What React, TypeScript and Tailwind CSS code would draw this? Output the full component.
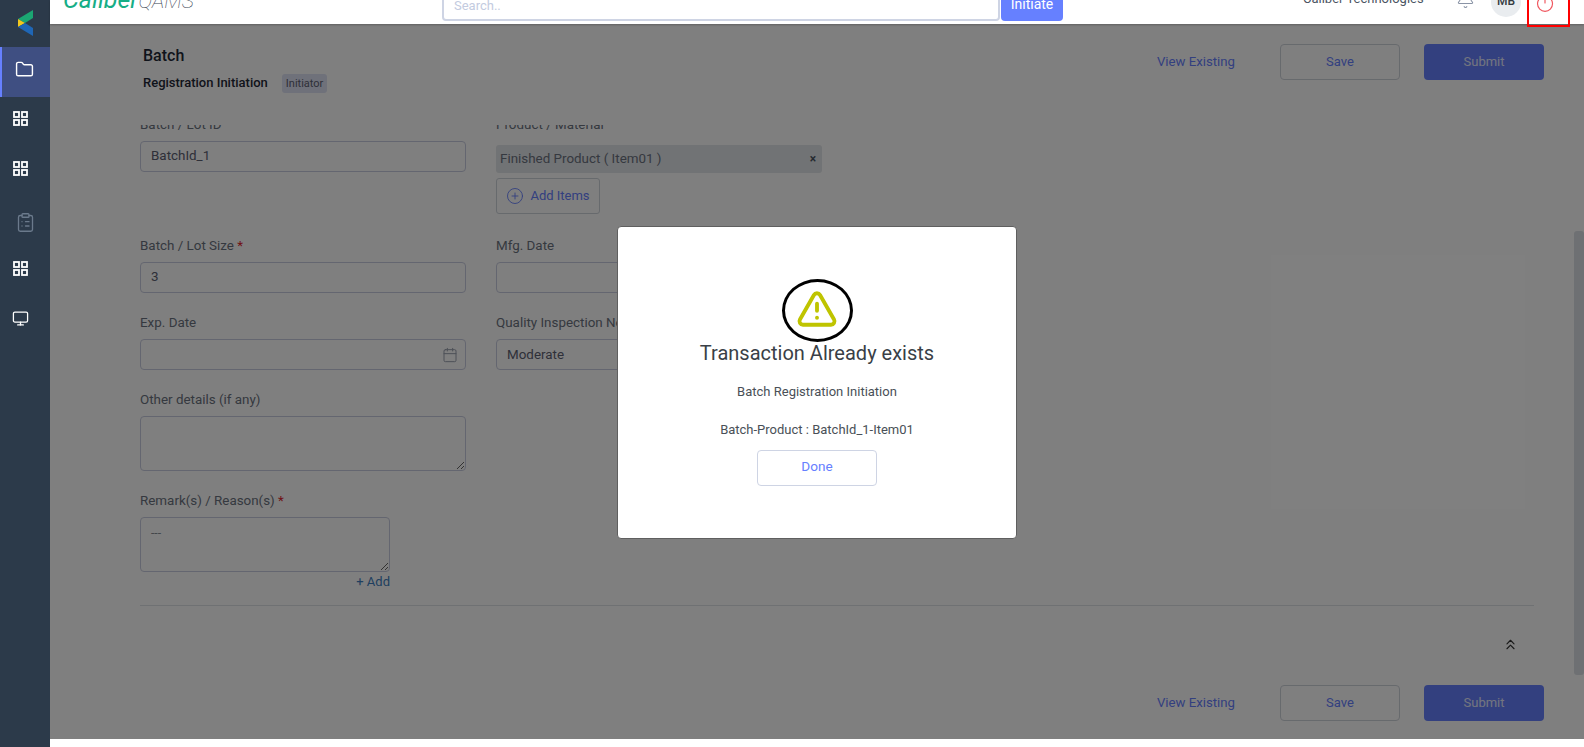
import { Bell, Calendar, ChevronsUp, CirclePlus, ClipboardList, Folder, Monitor, Power, TriangleAlert } from "lucide-react";

function GridIcon() {
  return (
    <svg width="15" height="15" viewBox="0 0 15 15" fill="none" stroke="white" strokeWidth="1.8">
      <rect x="1" y="1" width="5" height="5" />
      <rect x="9" y="1" width="5" height="5" />
      <rect x="1" y="9" width="5" height="5" />
      <rect x="9" y="9" width="5" height="5" />
    </svg>
  );
}

function Logo() {
  return (
    <svg width="16" height="27" viewBox="0 0 16 27">
      <polygon points="15,0 15,8 7,13 0,9" fill="#1ba672" />
      <polygon points="0,9 7,13 0,17" fill="#f2c81e" />
      <polygon points="0,17 7,13 15,18 15,26" fill="#1f66b5" />
    </svg>
  );
}

function Label({ children, required }: { children: React.ReactNode; required?: boolean }) {
  return (
    <div className="h-5 mb-[6px] text-[13.4px] leading-5 text-[#6b7280] whitespace-nowrap">
      {children}
      {required && <span className="text-[#e11d2e]"> *</span>}
    </div>
  );
}

function Field({ value, children }: { value?: React.ReactNode; children?: React.ReactNode }) {
  return (
    <div className="h-[31px] w-full rounded-[4px] border border-[#c9cde0] bg-white px-[10px] flex items-center justify-between text-[13.4px] text-[#5d6072]">
      <span>{value}</span>
      {children}
    </div>
  );
}

function Actions() {
  return (
    <div className="flex items-center justify-end">
      <span className="text-[13.2px] text-[#6680ff] mr-[45px]">View Existing</span>
      <button className="w-[120px] h-[36px] rounded-[4px] border border-[#ced4da] text-[13px] text-[#6680ff] mr-[24px]">Save</button>
      <button className="w-[120px] h-[36px] rounded-[4px] bg-[#6680ff] text-[13px] text-[#e8ebff]">Submit</button>
    </div>
  );
}

export default function App() {
  return (
    <div className="flex h-screen overflow-hidden bg-white font-['Roboto',sans-serif]">
      {/* sidebar */}
      <aside className="w-[50px] shrink-0 bg-[#2c3a4a] flex flex-col">
        <div className="h-[47px] pt-[10px] pl-[18px]"><Logo /></div>
        <div className="h-[50px] w-full bg-[#3f4f82] border-l-2 border-[#6680ff] pl-[13px] pb-[6px] flex items-center">
          <Folder size={19} color="white" strokeWidth={1.8} />
        </div>
        <div className="h-[42px] pl-[13px] flex items-center"><GridIcon /></div>
        <div className="h-[58px] pl-[13px] flex items-center"><GridIcon /></div>
        <div className="h-[50px] pl-[15px] flex items-center"><ClipboardList size={21} color="#6b7a8c" strokeWidth={1.5} /></div>
        <div className="h-[42px] pl-[13px] flex items-center"><GridIcon /></div>
        <div className="h-[58px] pl-[12px] flex items-center"><Monitor size={17} color="white" strokeWidth={1.8} /></div>
      </aside>

      <div className="relative flex-1 min-w-0 flex flex-col h-[739px]">
        {/* top bar */}
        <header className="relative z-20 h-[24px] shrink-0 bg-white shadow-[0_1px_2px_rgba(0,0,0,0.25)]">
          <div className="h-full overflow-hidden flex items-end">
            <div className="ml-[13px] w-[379px] mb-[3px] flex items-baseline text-[25px] leading-[40px] italic whitespace-nowrap">
              <span className="text-[#16ae86]">Caliber</span>
              <span className="text-[#374151] font-thin text-[21px]">QAMS</span>
            </div>
            <div className="w-[558px] h-[40px] mb-[3px] rounded-[4px] border-2 border-[#ced4e4] text-[13px] text-[#c3cbe0] px-[10px] flex items-end pb-[4px]">Search..</div>
            <div className="ml-[1px] w-[62px] h-[40px] mb-[3px] rounded-[4px] bg-[#6680ff] text-white text-[14px] flex items-end justify-center pb-[6px]">Initiate</div>
            <div className="ml-[240px] w-[120px] mb-[15px] text-[13px] leading-5 text-[#4b5563] whitespace-nowrap">Caliber Technologies</div>
            <div className="ml-[33px] mb-[15px]"><Bell size={19} color="#8a94a6" strokeWidth={1.3} /></div>
            <div className="ml-[16px] mb-[7px] w-[30px] h-[30px] pb-[3px] rounded-full bg-[#e9ecef] text-[12px] font-medium text-[#343a40] flex items-center justify-center">MB</div>
            <div className="ml-[14px] mb-[11px]"><Power size={20} color="#f0565e" strokeWidth={1.4} /></div>
          </div>
          <div className="absolute right-[14px] -top-[2px] w-[43px] h-[29px] border-2 border-[#ff0000]" />
        </header>

        <main className="relative flex-1 min-h-0 flex flex-col">
          {/* sticky title */}
          <div className="h-[101px] shrink-0 pl-[93px] pr-[40px] pt-[20px] flex justify-between items-start">
            <div>
              <h1 className="text-[16px] leading-[24px] font-medium text-[#1f2937]">Batch</h1>
              <div className="mt-[5px] flex items-center">
                <span className="text-[13px] font-medium text-[#1f2937]">Registration Initiation</span>
                <span className="ml-[14px] mt-[1px] h-[19px] px-[4px] rounded-[3px] bg-[#dfe3f5] text-[11px] leading-[19px] text-[#5d6072]">Initiator</span>
              </div>
            </div>
            <Actions />
          </div>

          {/* form, scrolled */}
          <div className="flex-1 min-h-0 overflow-hidden pl-[90px] pr-[50px]">
            <div className="-mt-[10px] grid grid-cols-[326px_326px] gap-x-[30px] justify-start">
              <div>
                <Label>Batch / Lot ID</Label>
                <Field value="BatchId_1" />
              </div>
              <div>
                <Label>Product / Material</Label>
                <div className="mt-[10px] h-[28px] rounded-[3px] bg-[#e3e6ea] px-[4px] flex items-center justify-between text-[13.4px] text-[#6b7280]">
                  Finished Product ( Item01 )
                  <span className="text-[12px] font-bold text-[#4b5563] mr-[2px]">×</span>
                </div>
                <div className="mt-[5px] w-[104px] h-[36px] rounded-[3px] border border-[#ced4da] flex items-center justify-center gap-[6px] text-[13px] text-[#6680ff]">
                  <CirclePlus size={18} strokeWidth={1.2} />
                  Add Items
                </div>
              </div>

              <div className="mt-[22px]">
                <Label required>Batch / Lot Size</Label>
                <Field value="3" />
              </div>
              <div className="mt-[22px]">
                <Label>Mfg. Date</Label>
                <Field />
              </div>

              <div className="mt-[20px]">
                <Label>Exp. Date</Label>
                <Field><span className="-mr-[3px]"><Calendar size={16} color="#9aa0ae" strokeWidth={1.5} /></span></Field>
              </div>
              <div className="mt-[20px]">
                <Label>Quality Inspection Necessity</Label>
                <Field value={<span className="block pt-[2px]">Moderate</span>} />
              </div>

              <div className="mt-[20px] col-span-2">
                <Label>Other details (if any)</Label>
                <textarea className="block w-[326px] h-[55px] rounded-[4px] border border-[#c9cde0] bg-white" />
              </div>
              <div className="mt-[20px] col-span-2">
                <Label required>Remark(s) / Reason(s)</Label>
                <textarea defaultValue="---" className="block w-[250px] h-[55px] rounded-[4px] border border-[#c9cde0] bg-white px-[10px] py-[6px] text-[12px] text-[#868e96]" />
                <div className="mt-[1px] w-[250px] text-right text-[13px] leading-[18px] text-[#3f7fbf]">+ Add</div>
              </div>
            </div>

            <div className="mt-[14px] border-t border-[#dee2e6]" />
            <div className="mt-[30px] flex justify-end pr-[15px]"><ChevronsUp size={17} color="#333" strokeWidth={1.6} /></div>
            <div className="mt-[32px] -mr-[10px]"><Actions /></div>
          </div>

          {/* scrollbar */}
          <div className="absolute right-0 top-[207px] w-[10px] h-[444px] rounded-[3px] bg-[#dde1e6]" />
        </main>

        {/* modal */}
        <div className="absolute z-10 left-0 right-0 top-[24px] bottom-0 bg-black/50 flex items-center justify-center">
          <div className="mt-[2px] w-[400px] h-[313px] rounded-[4px] bg-white border border-[#5f5f5f] flex flex-col items-center pt-[52px]">
            <div className="w-[71px] h-[63px] pb-[4px] rounded-[50%] border-[3px] border-black flex items-center justify-center">
              <TriangleAlert size={42} color="#bfc400" strokeWidth={2.2} />
            </div>
            <h2 className="-mt-[1px] text-[20px] leading-[24px] font-normal text-[#3a3f47]">Transaction Already exists</h2>
            <p className="mt-[17px] text-[13px] leading-5 text-[#495057]">Batch Registration Initiation</p>
            <p className="mt-[18px] text-[13px] leading-5 text-[#495057]">Batch-Product : BatchId_1-Item01</p>
            <button className="mt-[10px] w-[120px] h-[36px] rounded-[4px] border border-[#ced4e4] text-[13.6px] text-[#6680ff] pb-[3px]">Done</button>
          </div>
        </div>
      </div>
    </div>
  );
}
